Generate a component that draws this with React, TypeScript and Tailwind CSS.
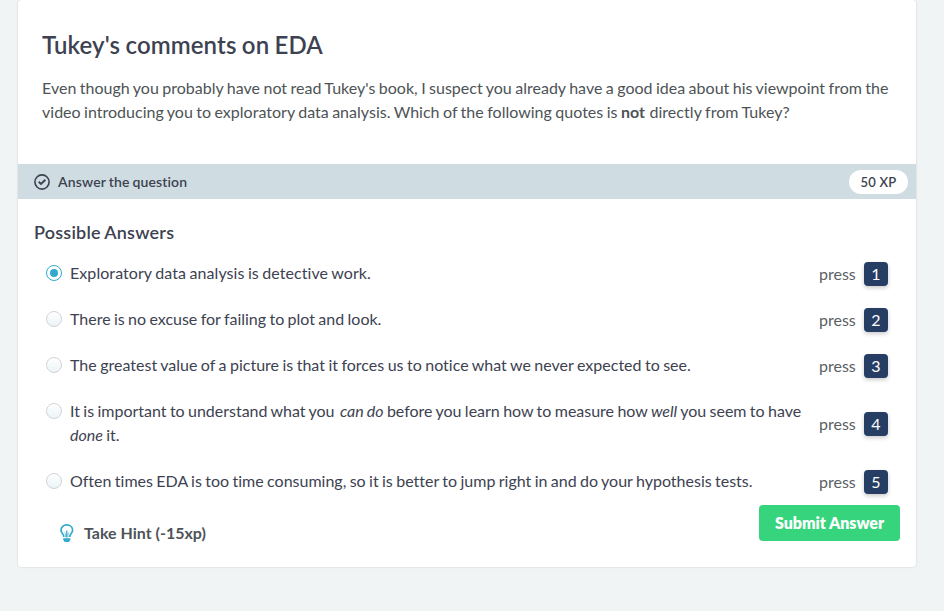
import type { ReactNode } from "react";

type Answer = { text: ReactNode; tracking: string };

const answers: Answer[] = [
  { text: "Exploratory data analysis is detective work.", tracking: "tracking-[0.07px]" },
  { text: "There is no excuse for failing to plot and look.", tracking: "tracking-[-0.01px]" },
  { text: "The greatest value of a picture is that it forces us to notice what we never expected to see.", tracking: "tracking-[0.015px]" },
  {
    text: (
      <>
        It is important to understand what you <em className="ml-[2px]">can do</em> before you learn how to measure how <em>well</em> you seem to have <em>done</em> it.
      </>
    ),
    tracking: "tracking-[-0.01px]",
  },
  { text: "Often times EDA is too time consuming, so it is better to jump right in and do your hypothesis tests.", tracking: "tracking-[-0.001px]" },
];

function CheckIcon() {
  return (
    <svg className="size-4" viewBox="0 0 16 16" fill="none" stroke="#3d4251">
      <circle cx="8" cy="8" r="7.1" strokeWidth="1.6" />
      <path d="M4.7 7.8 7 10 11.4 5.8" strokeWidth="1.9" />
    </svg>
  );
}

function BulbIcon() {
  return (
    <svg className="h-[18px] w-[14px]" viewBox="0 0 14 18" fill="none" stroke="#33aacc">
      <path d="M3.7 13V12C3.7 10.4 1 9.3 1 6.2C1 3 3.6 .9 6.8 .9S12.6 3 12.6 6.2C12.6 9.3 9.9 10.4 9.9 12V13" strokeWidth="1.7" />
      <path d="M6.8 6.5V13.6" strokeWidth="1.2" />
      <path d="M4.6 8.4 5.6 9.8V13.4M9 8.4 8 9.8V13.4" strokeWidth=".7" />
      <path d="M3.2 14.2H10.4V15.8L8.9 18H4.7L3.2 15.8Z" fill="#33aacc" stroke="none" />
    </svg>
  );
}

function Radio({ checked }: { checked: boolean }) {
  return checked ? (
    <span className="mt-1 flex size-4 shrink-0 items-center justify-center rounded-full border border-[#33aacc] bg-white">
      <span className="size-2 rounded-full bg-[#33aacc]" />
    </span>
  ) : (
    <span className="mt-1 size-4 shrink-0 rounded-full border border-[#d1d3d8] bg-linear-to-b from-white to-[#ebf4f7]" />
  );
}

export default function App() {
  return (
    <div className="h-[611px] w-[944px] overflow-hidden bg-[#f0f4f5] pl-[18px] font-['Lato',sans-serif] text-base leading-6 text-[#3d4251] [font-variant-ligatures:none] [word-spacing:-0.7px]">
      <main className="h-[567px] w-[898px] rounded-[4px] bg-white shadow-[0_0_1px_1px_rgba(60,80,80,0.08)]">
        <section className="h-[164px] px-6 pt-[30px]">
          <h1 className="text-[24px] leading-[30px] font-semibold tracking-[0.1px]">Tukey's comments on EDA</h1>
          <p className="mt-4 tracking-[0.015px] text-[#4d5356]">
            Even though you probably have not read Tukey's book, I suspect you already have a good idea about his viewpoint from the video introducing you to exploratory data analysis. Which of the following quotes is <strong>not</strong> <span className="ml-px tracking-[0.05px]">directly from Tukey?</span>
          </p>
        </section>
        <div className="flex h-[35px] items-center bg-[#cfdce1] pr-2 pl-4">
          <CheckIcon />
          <h2 className="ml-2 text-sm font-semibold tracking-[0.14px]">Answer the question</h2>
          <span className="ml-auto flex h-6 w-[59px] items-center justify-center rounded-full bg-white text-[13px] font-semibold tracking-[0.2px] [word-spacing:0px]">50 XP</span>
        </div>
        <section className="px-4 pt-[21px]">
          <h3 className="text-lg leading-6 font-semibold tracking-[0.22px]">Possible Answers</h3>
          <ul className="mt-[17px] flex flex-col gap-[22px] pr-3 pl-3">
            {answers.map((answer, i) => (
              <li key={i} className="flex items-center">
                <label className="flex w-[773px] gap-2">
                  <Radio checked={i === 0} />
                  <span className={`w-[736px] ${answer.tracking}`}>{answer.text}</span>
                </label>
                <span className="mt-px -mb-px flex shrink-0 gap-2 text-[#5b6064]">
                  press
                  <kbd className="flex size-6 items-center justify-center rounded-[4px] bg-[#263e63] font-['Lato',sans-serif] text-white shadow-[0_2px_4px_rgba(0,0,0,0.2)]">{i + 1}</kbd>
                </span>
              </li>
            ))}
          </ul>
          <div className="mt-3 flex justify-between pl-[26px]">
            <button className="flex h-[18px] items-center gap-[10px] self-center pt-5 font-bold text-[#4d5356]">
              <BulbIcon />
              Take Hint (-15xp)
            </button>
            <button className="h-9 w-[141px] rounded-[4px] bg-[#36d57d] font-extrabold tracking-[-0.05px] text-white">Submit Answer</button>
          </div>
        </section>
      </main>
    </div>
  );
}
